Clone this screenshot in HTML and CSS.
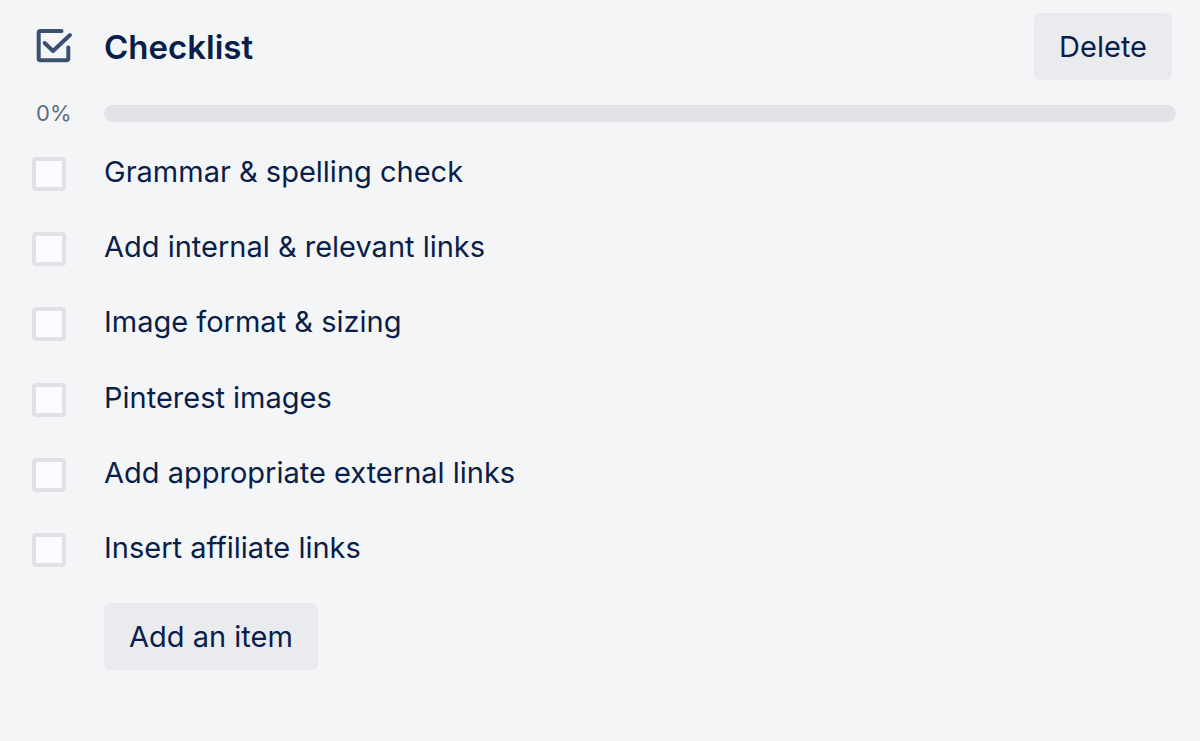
FILE: index.html
```html
<!DOCTYPE html>
<html lang="en">
<head>
<meta charset="utf-8">
<meta name="viewport" content="width=device-width, initial-scale=1">
<title>Checklist</title>
<link rel="stylesheet" href="styles.css">
</head>
<body>
<main class="checklist">
  <header class="header">
    <svg class="icon" viewBox="0 0 40 40" aria-hidden="true">
      <path d="M27.500 4H6.500Q4.700 4 4.700 5.800V31.500Q4.700 33.300 6.500 33.300H32.500Q34.300 33.300 34.300 31.500V20.500"/>
      <path d="M10.700 16L19 24L36 8"/>
    </svg>
    <h1 class="title">Checklist</h1>
    <button class="button" type="button">Delete</button>
  </header>
  <div class="progress">
    <span class="percent" id="percent">0%</span>
    <div class="track" role="progressbar" aria-labelledby="percent" aria-valuenow="0" aria-valuemin="0" aria-valuemax="100"></div>
  </div>
  <ul class="items">
    <li><label class="item"><input class="box" type="checkbox"><span class="text">Grammar &amp; spelling check</span></label></li>
    <li><label class="item"><input class="box" type="checkbox"><span class="text">Add internal &amp; relevant links</span></label></li>
    <li><label class="item"><input class="box" type="checkbox"><span class="text">Image format &amp; sizing</span></label></li>
    <li><label class="item"><input class="box" type="checkbox"><span class="text">Pinterest images</span></label></li>
    <li><label class="item"><input class="box" type="checkbox"><span class="text">Add appropriate external links</span></label></li>
    <li><label class="item"><input class="box" type="checkbox"><span class="text">Insert affiliate links</span></label></li>
  </ul>
  <button class="button add" type="button">Add an item</button>
</main>
</body>
</html>
```
FILE: styles.css
```css
* { box-sizing: border-box; }
body {
  margin: 0;
  background: #f4f5f7;
  color: #091e48;
  font-family: Inter, "Liberation Sans", sans-serif;
  font-size: 29px;
  line-height: 36px;
}
.checklist { padding: 13px 24px 24px 32px; }
.header {
  display: grid;
  grid-template-columns: 72px 1fr auto;
  align-items: center;
  padding-right: 4px;
}
.icon {
  width: 40px;
  height: 40px;
  margin-left: 2px;
  fill: none;
  stroke: #3b4f70;
  stroke-width: 4;
  stroke-linecap: round;
  stroke-linejoin: round;
}
.title { margin: 0; font-size: 33px; font-weight: 600; }
.button {
  min-height: 67px;
  padding: 0 25px;
  border: 0;
  border-radius: 6px;
  background: #eaebef;
  color: inherit;
  font: inherit;
}
.progress {
  display: grid;
  grid-template-columns: 72px 1fr;
  align-items: center;
  margin-top: 15px;
}
.percent {
  padding-left: 4px;
  color: #5e6c84;
  font-size: 22px;
}
.track { height: 17px; border-radius: 9px; background: #e1e3e9; }
.items {
  display: grid;
  grid-auto-rows: 1fr;
  min-height: 452px;
  margin: 5px 0 15px;
  padding: 0;
  list-style: none;
}
.item {
  display: grid;
  grid-template-columns: 34px 1fr;
  column-gap: 38px;
  align-items: center;
  height: 100%;
}
.box {
  appearance: none;
  width: 34px;
  height: 34px;
  margin: 0;
  border: 4px solid #dfe1e6;
  border-radius: 4px;
  background: #fafbfc;
}
.text { padding-bottom: 4px; }
.add { margin-left: 72px; }
```
